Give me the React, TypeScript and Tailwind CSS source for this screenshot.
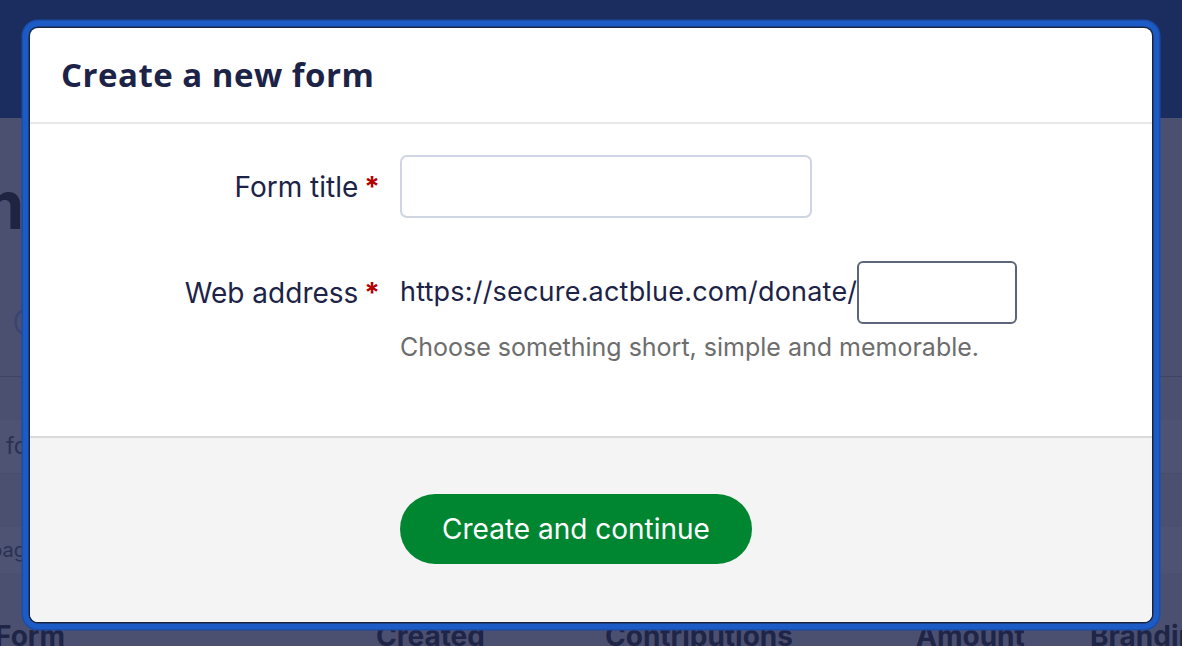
export default function App() {
  return (
    <div className="relative h-[646px] w-[1182px] overflow-hidden bg-[#4b5071] font-['Inter',sans-serif]">
      {/* page behind the dialog, dimmed */}
      <div className="h-[118px] bg-[#1b2c5e]" />
      <div className="pt-[52px]">
        <div className="h-[70px] whitespace-nowrap text-[66px] font-bold leading-[70px] text-[#1f2442]">
          <span className="-ml-[36px]">m</span>
        </div>
        <div className="mt-[68px] h-[28px] pl-[12px] text-[36px] font-light leading-[28px] text-[#3b4470]">C</div>
        <div className="mt-[40px] border-t border-[#3f4462]" />
        <div className="mt-[43px] flex h-[53px] items-center bg-[#4e5374] pl-[6px] text-[23px] text-[#2a3152]">
          for
        </div>
        <div className="h-[54px] border-t border-[#474c6a]" />
        <div className="flex h-[46px] items-center bg-[#4e5374] text-[20px] text-[#2a3152]">
          <span className="-ml-[10px]">page</span>
        </div>
        <div className="mt-[48px] flex whitespace-nowrap text-[28px] font-bold leading-[30px] text-[#1f2547]">
          <span className="-ml-[5px] w-[381px] shrink-0">Form</span>
          <span className="w-[229px] shrink-0">Created</span>
          <span className="w-[311px] shrink-0">Contributions</span>
          <span className="w-[174px] shrink-0">Amount</span>
          <span className="shrink-0">Branding</span>
        </div>
      </div>

      {/* dialog */}
      <div className="absolute left-[30px] top-[28px] flex h-[594px] w-[1122px] flex-col overflow-hidden rounded-[8px] bg-white shadow-[0_0_0_1.5px_#18243f,0_0_0_7px_#1c5bc6,0_0_0_8.5px_#1a4da8]">
        <div className="flex h-[96px] shrink-0 items-center border-b-2 border-[#e8e8e8] pl-[31px]">
          <h2 className="font-['Open_Sans',sans-serif] text-[33px] font-bold tracking-[0.5px] text-[#1c2347]">
            Create a new form
          </h2>
        </div>

        <div className="grid h-[312px] shrink-0 grid-cols-[350px_1fr] content-start gap-x-[20px] pt-[31px] text-[#1c2347]">
          <label className="flex h-[63px] items-center justify-end text-[28px]">
            Form title<span className="ml-[6px] font-bold text-[#b30000]">*</span>
          </label>
          <div>
            <input className="h-[63px] w-[412px] rounded-[7px] border-2 border-[#cfd5e2] bg-white px-3 outline-none" />
          </div>

          <label className="mt-[43px] flex h-[63px] items-center justify-end text-[28px]">
            Web address<span className="ml-[6px] font-bold text-[#b30000]">*</span>
          </label>
          <div className="mt-[43px]">
            <div className="flex items-center">
              <span className="text-[27px] tracking-[0.2px]">https://secure.actblue.com/donate/</span>
              <input className="h-[63px] w-[160px] rounded-[6px] border-2 border-[#5c6579] bg-white px-2 outline-none" />
            </div>
            <p className="mt-[5px] text-[25px] text-[#6d6d6d]">Choose something short, simple and memorable.</p>
          </div>
        </div>

        <div className="flex flex-1 items-start border-t-2 border-[#dadada] bg-[#f4f4f4] pl-[370px] pt-[56px]">
          <button className="h-[70px] w-[352px] rounded-full bg-[#008531] text-[28px] text-white">
            Create and continue
          </button>
        </div>
      </div>
    </div>
  );
}
